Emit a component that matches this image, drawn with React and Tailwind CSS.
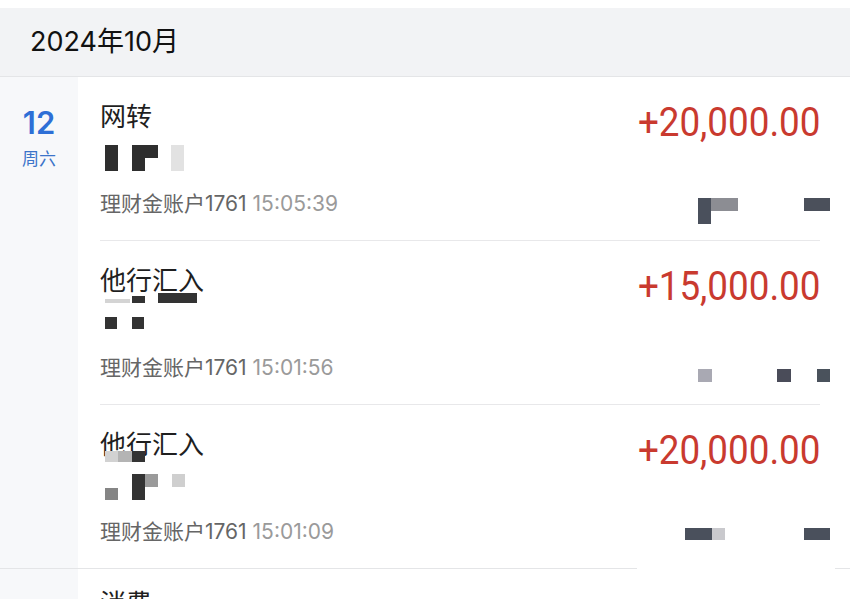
import React from "react";

const CJK = "font-['Inter','Noto_Sans_CJK_SC',sans-serif]";

// mosaic blocks that hide names / card numbers, in page coordinates [x, y, w, h, colour]
const ROWS = [
  {
    title: "网转",
    amount: "+20,000.00",
    account: "理财金账户1761",
    time: "15:05:39",
    top: 77,
    cells: [
      [105, 145, 13, 26, "#2e2e2e"],
      [132, 145, 26, 13, "#2e2e2e"],
      [132, 158, 13, 13, "#2e2e2e"],
      [171, 145, 13, 26, "#e2e2e2"],
      [698, 198, 13, 26, "#4a505c"],
      [711, 198, 27, 13, "#8c8d93"],
      [804, 198, 26, 13, "#4b505b"],
    ],
  },
  {
    title: "他行汇入",
    amount: "+15,000.00",
    account: "理财金账户1761",
    time: "15:01:56",
    top: 241,
    cells: [
      [105, 299, 25, 4, "#d4d4d4"],
      [132, 296, 13, 7, "#333333"],
      [158, 293, 39, 10, "#333333"],
      [105, 317, 12, 12, "#333333"],
      [132, 317, 12, 12, "#333333"],
      [698, 369, 14, 13, "#a9a9b3"],
      [777, 369, 14, 13, "#4a4c59"],
      [817, 369, 13, 13, "#4a525c"],
    ],
  },
  {
    title: "他行汇入",
    amount: "+20,000.00",
    account: "理财金账户1761",
    time: "15:01:09",
    top: 405,
    cells: [
      [105, 451, 13, 11, "#d2d2d2"],
      [118, 451, 14, 11, "#b4b4b4"],
      [132, 451, 13, 11, "#333333"],
      [132, 474, 13, 26, "#333333"],
      [145, 474, 13, 13, "#9a9a9a"],
      [172, 474, 13, 13, "#cfcfcf"],
      [105, 488, 13, 12, "#858585"],
      [637, 555, 198, 16, "#ffffff"],
      [685, 528, 27, 12, "#4a505c"],
      [712, 528, 13, 12, "#c9c9cd"],
      [804, 528, 26, 12, "#4a505c"],
    ],
  },
];

const TxRow = ({ row, last }) => (
  <div
    className={`relative flex justify-between pt-[25px] pb-[24px] ${
      last ? "" : "border-b border-[#e8e8ea]"
    }`}
  >
    <div className={CJK}>
      <div className="text-[26px] leading-[30px] text-[#1f1f1f]">{row.title}</div>
      <div className="h-[60px]" />
      <div className="text-[21px] leading-[24px] text-[#666]">
        {row.account} <span className="text-[#9a9a9a]">{row.time}</span>
      </div>
    </div>
    <div className="mt-[1px] origin-right scale-x-[0.92] whitespace-nowrap font-['Roboto',sans-serif] text-[40px] leading-[40px] text-[#c93a2f]">
      {row.amount}
    </div>

    {row.cells.map(([x, y, w, h, c], i) => (
      <div
        key={i}
        className="absolute"
        style={{ left: x - 100, top: y - row.top, width: w, height: h, background: c }}
      />
    ))}
  </div>
);

export default function App() {
  return (
    <div className="h-[599px] w-[850px] overflow-hidden bg-white pt-[8px]">
      {/* month header */}
      <div
        className={`flex h-[69px] items-center border-b border-[#e4e5e7] bg-[#f2f3f5] px-[30px] text-[27px] text-[#111] ${CJK}`}
      >
        2024年10月
      </div>

      {/* day group */}
      <div className="flex border-b border-[#e4e5e7]">
        <div className="flex w-[78px] shrink-0 flex-col items-center bg-[#f7f8fa] pt-[30px]">
          <div className="font-['Inter',sans-serif] text-[31px] font-semibold leading-[32px] text-[#2e6fd6]">
            12
          </div>
          <div className={`mt-[10px] text-[17px] leading-[20px] text-[#3b74c9] ${CJK}`}>
            周六
          </div>
        </div>
        <div className="ml-[22px] mr-[30px] flex-1">
          {ROWS.map((r, i) => (
            <TxRow key={i} row={r} last={i === ROWS.length - 1} />
          ))}
        </div>
      </div>

      {/* next day, cut off at the window edge */}
      <div className="flex">
        <div className="h-[120px] w-[78px] shrink-0 bg-[#f7f8fa]" />
        <div className={`ml-[22px] pt-[20px] text-[26px] leading-[30px] text-[#1f1f1f] ${CJK}`}>
          消费
        </div>
      </div>
    </div>
  );
}
